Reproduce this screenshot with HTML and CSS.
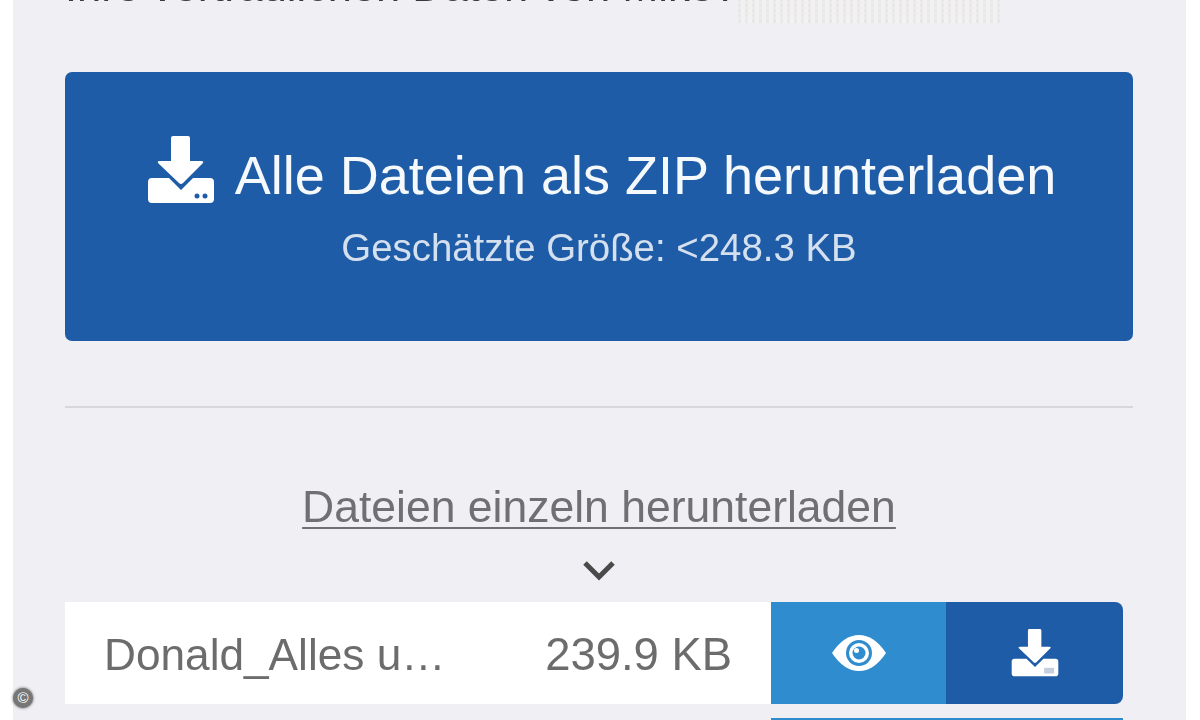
FILE: index.html
```html
<!DOCTYPE html>
<html lang="de">
<head>
<meta charset="utf-8">
<title>Dateien herunterladen</title>
<link rel="stylesheet" href="styles.css">
</head>
<body>
<main class="panel">
  <div class="intro"><span class="intro-text">Ihre vertraulichen Daten von Mike?</span><span class="redacted"></span></div>
  <a class="zip">
    <span class="zip-title">
      <svg class="zip-icon" viewBox="0 0 66 68"><path class="white" d="M23 2Q23 0 25 0H40Q42 0 42 2V25H53Q57 25 54 28L35 47Q33 49 31 47L11 28Q8 25 12 25H23Z"/><path class="white" d="M4 42H21L33 54L45 42H62Q66 42 66 46V63Q66 67 62 67H4Q0 67 0 63V46Q0 42 4 42Z"/><circle class="blue" cx="49" cy="60" r="2.5"/><circle class="blue" cx="57" cy="60" r="2.5"/></svg>
      <span class="zip-label">Alle Dateien als ZIP herunterladen</span>
    </span>
    <span class="zip-size">Geschätzte Größe: &lt;248.3 KB</span>
  </a>
  <hr class="rule">
  <div class="single"><a class="single-link">Dateien einzeln herunterladen</a></div>
  <div class="chevron-wrap"><svg class="chevron" viewBox="0 0 34 22"><path d="M3 4L17 18L31 4"/></svg></div>
  <div class="file">
    <span class="file-name">Donald_Alles u…</span>
    <span class="file-size">239.9 KB</span>
    <a class="action view">
      <svg class="eye" viewBox="0 0 54 36"><path class="white" d="M0 18Q12 0 27 0Q42 0 54 18Q42 36 27 36Q12 36 0 18Z"/><circle class="light" cx="27" cy="18" r="13"/><circle class="white" cx="27" cy="18" r="10"/><circle class="light" cx="27" cy="18" r="6.5"/><circle class="white" cx="24.5" cy="15.5" r="2.5"/></svg>
    </a>
    <a class="action get">
      <svg class="small-dl" viewBox="0 0 66 68"><path class="white" d="M23 2Q23 0 25 0H40Q42 0 42 2V25H53Q57 25 54 28L35 47Q33 49 31 47L11 28Q8 25 12 25H23Z"/><path class="white" d="M4 42H21L33 54L45 42H62Q66 42 66 46V63Q66 67 62 67H4Q0 67 0 63V46Q0 42 4 42Z"/><rect class="grey" x="46" y="55" width="14" height="8"/></svg>
    </a>
  </div>
  <div class="next"></div>
</main>
<span class="badge">©</span>
</body>
</html>
```

FILE: styles.css
```css
* { box-sizing: border-box; }
html, body { margin: 0; height: 720px; overflow: hidden; background: #fff; }
body { font-family: "Liberation Sans", Arial, sans-serif; position: relative; }
.panel { margin: 0 14px 0 13px; height: 720px; padding: 0 53px 0 52px; background: #efeff4; overflow: hidden; filter: blur(0.6px); }
.intro { height: 72px; margin-top: -39px; display: flex; align-items: flex-start; }
.intro-text { font-size: 43.4px; line-height: 50px; color: #3a3a3a; white-space: nowrap; }
.redacted { width: 262px; height: 63px; background: repeating-linear-gradient(0deg, rgba(239,239,244,0.6) 0 2px, transparent 2px 5px), repeating-linear-gradient(90deg, #e8e8e8 0 3px, #f3f2f0 3px 7px); }
.zip { display: flex; flex-direction: column; align-items: center; height: 269px; margin-top: 39px; padding-top: 59px; background: #1f5ca8; border-radius: 7px; color: #fff; }
.zip-title { display: flex; align-items: center; gap: 21px; padding-left: 6px; line-height: 68px; white-space: nowrap; color: #f6f9fc; }
.zip-label { font-size: 54px; padding-top: 10px; }
.zip-icon { width: 66px; height: 68px; }
.zip-size { margin-top: 17px; font-size: 38.4px; line-height: 44px; color: #d5e0ee; }
.white { fill: #fff; }
.blue { fill: #1f5ca8; }
.light { fill: #2f8ccf; }
.grey { fill: #c3cfdc; }
.rule { height: 2px; margin: 65px 0 0; border: 0; background: #d7d7dc; }
.single { margin-top: 73px; text-align: center; height: 73px; }
.single-link { font-size: 44.5px; line-height: 52px; color: #707074; text-decoration: underline; text-decoration-thickness: 2px; text-underline-offset: 5px; }
.chevron-wrap { margin-top: 3px; height: 45px; display: flex; justify-content: center; padding-top: 2px; }
.chevron { width: 34px; height: 22px; }
.chevron path { fill: none; stroke: #4a4a4a; stroke-width: 5; }
.file { display: flex; align-items: stretch; height: 102px; }
.file-name { flex: 0 0 442px; padding-left: 39px; background: #fff; font-size: 44.2px; line-height: 106px; color: #6c6c6c; white-space: nowrap; }
.file-size { flex: 0 0 264px; padding-right: 39px; text-align: right; background: #fff; font-size: 45.4px; line-height: 106px; color: #6c6c6c; }
.action { display: flex; align-items: center; justify-content: center; }
.view { flex: 0 0 175px; background: #2f8ccf; }
.get { flex: 0 0 177px; background: #1f5ca8; border-radius: 0 8px 8px 0; }
.eye { width: 54px; height: 36px; }
.small-dl { width: 48px; height: 48px; }
.next { width: 352px; height: 6px; margin: 14px 0 0 706px; background: #2f8ccf; }
.badge { position: absolute; left: 13px; top: 688px; width: 20px; height: 20px; border-radius: 50%; background: #777; color: #fff; font-size: 15px; line-height: 20px; text-align: center; box-shadow: 0 0 3px #555; }
```
